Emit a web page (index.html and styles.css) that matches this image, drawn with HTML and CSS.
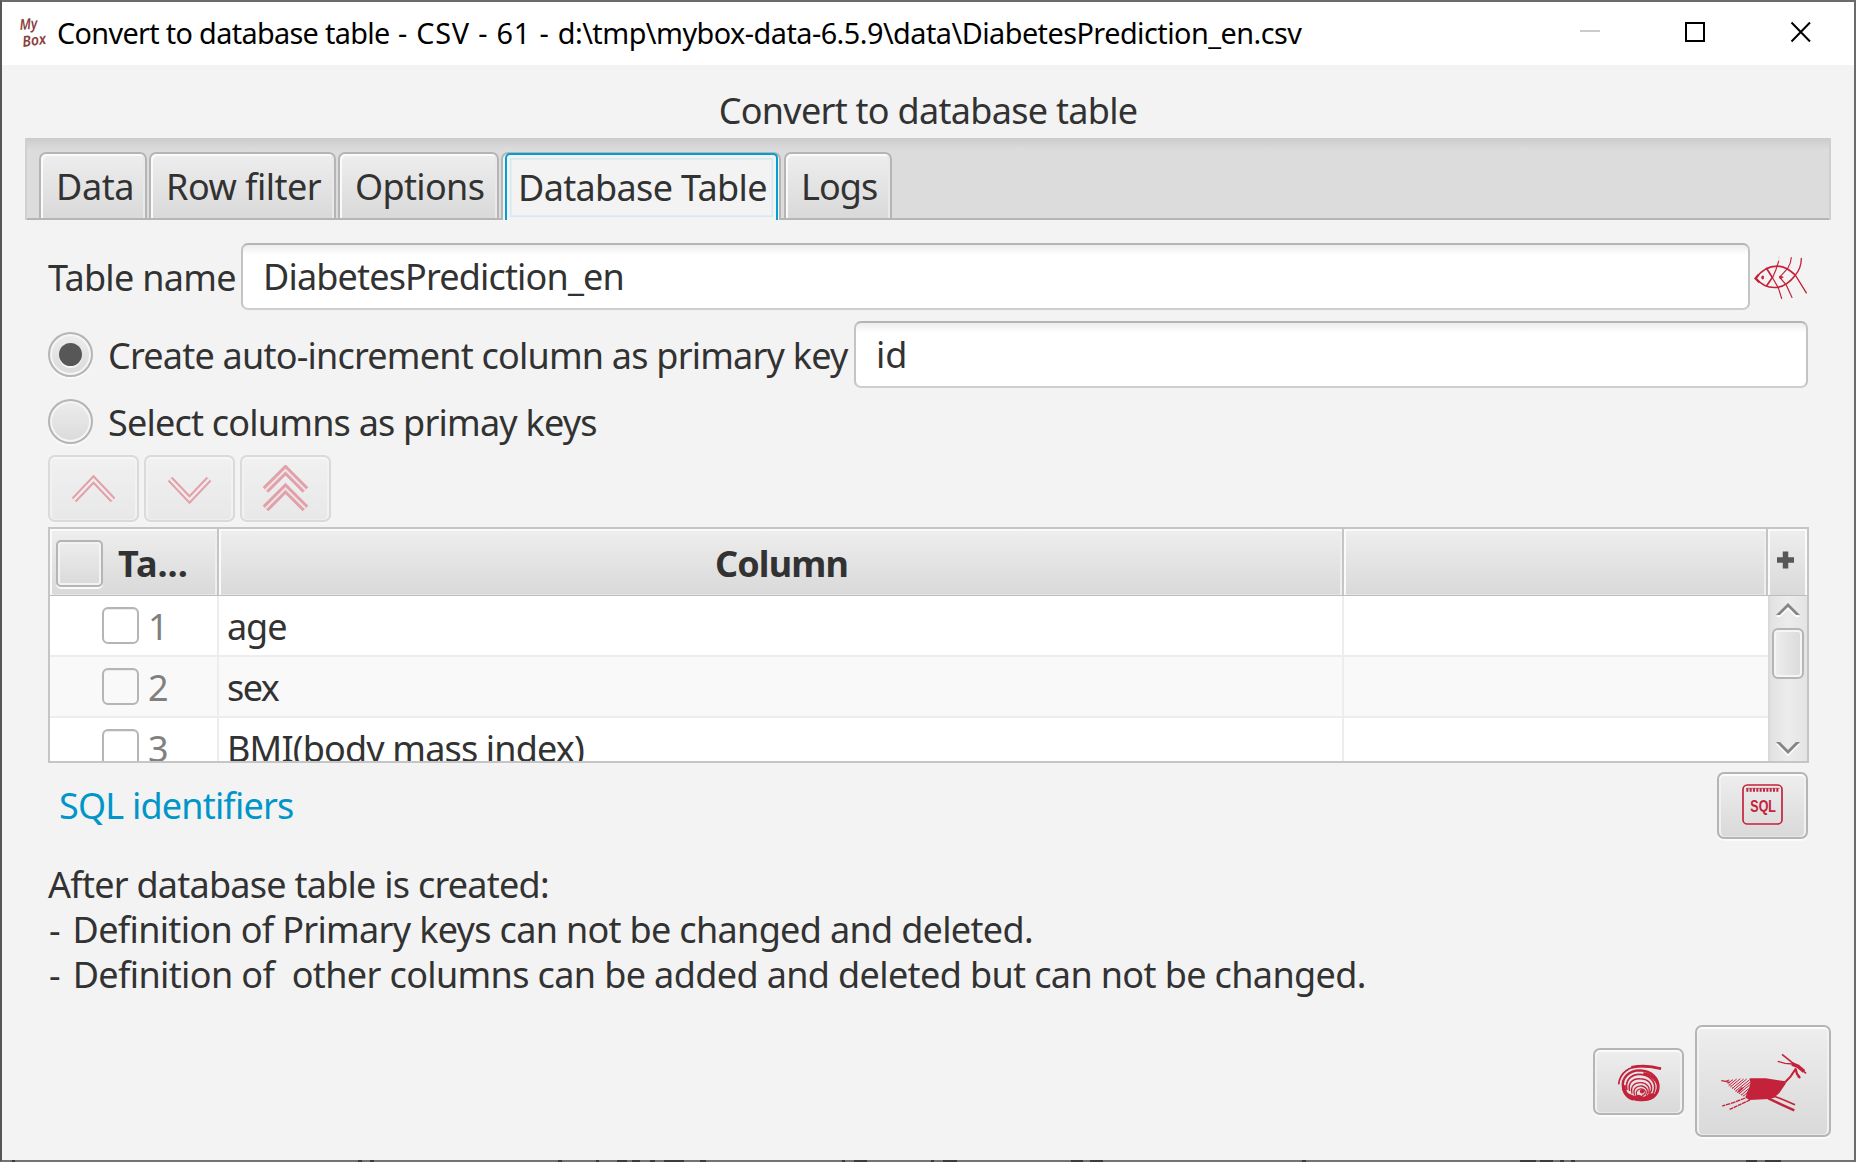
FILE: index.html
```html
<!DOCTYPE html>
<html lang="en">
<head>
<meta charset="utf-8">
<title>Convert to database table</title>
<link rel="stylesheet" href="styles.css">
</head>
<body>
<div class="window">
  <header class="titlebar">
    <svg class="logo" width="32" height="38" viewBox="0 -2 32 38">
      <text x="2" y="15" textLength="18" lengthAdjust="spacingAndGlyphs" transform="rotate(-5 2 15)">My</text>
      <text x="5" y="32" textLength="24" lengthAdjust="spacingAndGlyphs" transform="rotate(-8 5 32)">Box</text>
    </svg>
    <span class="caption"><span class="cap-name">Convert to database table</span><span class="cap-mid"> - CSV - 61 - </span><span class="cap-path">d:\tmp\mybox-data-6.5.9\data\DiabetesPrediction_en.csv</span></span>
    <svg class="controls" width="232" height="24" viewBox="0 0 232 24">
      <path d="M1 11H21" stroke="#ccc" stroke-width="2"/>
      <rect x="107" y="3" width="18" height="18" fill="none" stroke="#000" stroke-width="2"/>
      <path d="M212.500 2.500L231 21.500M231 2.500L212.500 21.500" stroke="#000" stroke-width="2"/>
    </svg>
  </header>

  <h1 class="heading">Convert to database table</h1>

  <nav class="tabs">
    <div class="tab tab-data">Data</div>
    <div class="tab tab-filter">Row filter</div>
    <div class="tab tab-options">Options</div>
    <div class="tab tab-database active"><span>Database Table</span></div>
    <div class="tab tab-logs">Logs</div>
  </nav>

  <main class="content">
    <div class="row name-row">
      <span class="label label-name">Table name</span>
      <div class="input input-name">DiabetesPrediction_en</div>
      <svg class="fish" width="56" height="48" viewBox="36 25.5 168 144">
        <g fill="none" stroke="#c4213a" stroke-linecap="round">
          <path d="M166 92C149 77 134 65 112 65C85 65 63 79 48 101C65 122 84 130 107 129C132 128 151 111 166 92" stroke-width="5"/>
          <path d="M55 91L46 102L56 112" stroke-width="6"/>
          <path d="M80 72L97 99L80 124" stroke-width="5"/>
          <path d="M97 101L108 75L116 50M97 99L115 130L125 162" stroke-width="3.500"/>
          <path d="M154 39Q153 56 143 72L119 98L139 122L156 159" stroke-width="3.500"/>
          <path d="M120 96L126 98L121 101" stroke-width="5"/>
          <path d="M184 42Q184 70 166 92L199 145" stroke-width="4"/>
          <path d="M117 37V43" stroke="#e9b5bc" stroke-width="2"/>
        </g>
        <ellipse cx="68" cy="99" rx="4" ry="6" fill="#c4213a"/>
      </svg>
    </div>

    <div class="row key-row">
      <span class="radio checked"></span>
      <span class="label label-create">Create auto-increment column as primary key</span>
      <div class="input input-id">id</div>
    </div>

    <div class="row select-row">
      <span class="radio"></span>
      <span class="label label-select">Select columns as primay keys</span>
    </div>

    <div class="toolbar">
      <div class="button disabled">
        <svg width="44" height="46" viewBox="0 0 44 46"><path class="edge" d="M2 34L21.500 13.500L41 34"/><path class="core" d="M2 34L21.500 13.500L41 34"/></svg>
      </div>
      <div class="button disabled">
        <svg width="44" height="46" viewBox="0 0 44 46"><path class="edge" d="M2 13L21.500 33.500L41 13"/><path class="core" d="M2 13L21.500 33.500L41 13"/></svg>
      </div>
      <div class="button disabled double">
        <svg width="46" height="48" viewBox="0 -1 46 48"><path class="edge" d="M2.500 24L22.500 4L42.500 24M2.500 42.500L22.500 22.500L42.500 42.500"/><path class="core" d="M2.500 24L22.500 4L42.500 24M2.500 42.500L22.500 22.500L42.500 42.500"/></svg>
      </div>
    </div>

    <div class="table">
      <div class="grid">
        <div class="th th-table"><span class="check-all"></span><span class="th-ta">Ta...</span></div>
        <div class="th th-column">Column</div>
        <div class="th"></div>
        <div class="td td-num"><span class="check"></span>1</div>
        <div class="td td-name age">age</div>
        <div class="td"></div>
        <div class="td td-num even"><span class="check"></span>2</div>
        <div class="td td-name even sex">sex</div>
        <div class="td even"></div>
        <div class="td td-num"><span class="check"></span>3</div>
        <div class="td td-name bmi">BMI(body mass index)</div>
        <div class="td"></div>
      </div>
      <div class="side">
        <div class="plus"><svg width="18" height="18" viewBox="0 0 18 18"><path d="M8.500 .5V17.500M0 9H17" stroke="#575757" stroke-width="5.500"/></svg></div>
        <div class="scrollbar">
          <svg width="24" height="14" viewBox="0 0 24 14"><path d="M0 14L12 2L24 14H20L12 6L4 14Z" fill="#fff"/><path d="M0 12L12 0L24 12H20L12 4L4 12Z" fill="#858585"/></svg>
          <div class="thumb"></div>
          <svg class="down" width="24" height="14" viewBox="0 0 24 14"><path d="M0 2L12 14L24 2H20L12 10L4 2Z" fill="#fff"/><path d="M0 0L12 12L24 0H20L12 8L4 0Z" fill="#858585"/></svg>
        </div>
      </div>
    </div>

    <div class="links">
      <a class="link">SQL identifiers</a>
      <div class="button">
        <svg width="87" height="63" viewBox="477 792 261 189">
          <rect x="549" y="825" width="117" height="117" rx="13" fill="none" stroke="#c4213a" stroke-width="5"/>
          <path d="M558 835H659" stroke="#c4213a" stroke-width="2"/>
          <path d="M559 840H659" stroke="#c4213a" stroke-width="11" stroke-dasharray="6 4"/>
          <text class="sql" x="571" y="905" textLength="77" lengthAdjust="spacingAndGlyphs">SQL</text>
        </svg>
      </div>
    </div>

    <div class="notes">
      <div class="note-1">After database table is created:</div>
      <div class="note-2"><span class="dash">-</span> Definition of Primary keys can not be changed and deleted.</div>
      <div class="note-3"><span class="dash">-</span> Definition of&nbsp; other columns can be added and deleted but can not be changed.</div>
    </div>
  </main>

  <footer class="actions">
    <div class="button">
      <svg width="87" height="63" viewBox="105 150 261 189">
        <g fill="none" stroke="#c4213a">
          <path d="M176 253C179 218 209 197 247 199C267 199 285 202 303 206" stroke-width="5"/>
          <path d="M214 202C242 196 276 198 303 206" stroke-width="8"/>
          <path d="M189 263C184 234 206 211 240 211C276 212 297 236 295 262C294 290 270 300 247 300C216 302 190 287 189 258" stroke-width="7"/>
          <path d="M192 256V268C197 284 206 292 220 297" stroke-width="11"/>
          <path d="M250 220C272 223 290 239 294 255C297 280 282 291 267 297" stroke-width="8"/>
          <path d="M201 270C194 241 213 222 241 223C268 225 286 243 284 266C282 283 274 288 266 293" stroke-width="5"/>
          <path d="M209 273C203 250 217 235 240 236C264 236 278 251 274 272L265 286" stroke-width="4.500"/>
          <path d="M216 281C211 260 222 247 242 248C261 249 272 262 266 280" stroke-width="4"/>
          <path d="M224 286C217 269 229 256 246 258C263 262 266 277 258 287" stroke-width="4"/>
          <path d="M232 289C223 273 237 263 250 268C260 274 257 286 246 286" stroke-width="3.500"/>
        </g>
        <path d="M204 280L222 287L237 284L252 290L274 280L288 284Q274 301 247 303Q220 303 204 290Z" fill="#c4213a"/>
        <circle cx="246" cy="274" r="6.500" fill="#c4213a"/>
      </svg>
    </div>
    <div class="button run">
      <svg width="132" height="108" viewBox="411 81 396 324">
        <path d="M569 235L617 235L678 244L677 251L658 279L642 293L628 297L568 300L557 293L560 279L568 262L571 250Z" fill="#c4213a"/>
        <g fill="none" stroke="#c4213a">
          <path d="M676 246L692 229L708 205" stroke-width="6"/>
          <path d="M666 163L696 187L714 199L738 220" stroke-width="5"/>
          <path d="M653 184L675 190L698 192" stroke-width="4"/>
          <path d="M696 192L714 199L732 214" stroke-width="11"/>
          <path d="M707 207L711 222L719 232" stroke-width="7"/>
          <path d="M713 229L721 234" stroke-width="5"/>
          <path d="M640 288L670 299L705 314" stroke-width="5"/>
          <path d="M625 295L663 313L703 331" stroke-width="7"/>
          <path d="M556 294L520 308L487 318" stroke-width="4" stroke-dasharray="14 2"/>
          <path d="M570 300L540 314L509 328" stroke-width="4" stroke-dasharray="12 2"/>
          <path d="M484 242L497 244L509 248" stroke-width="4"/>
          <path d="M497 244L508 240M503 250L519 239M506 257L530 237M511 261L541 236M516 266L551 237M522 269L560 237M526 274L569 239M531 278L571 246M537 281L570 254M543 286L566 266M550 289L562 277" stroke-width="3"/>
          <path d="M535 275L548 263" stroke-width="6"/>
          <path d="M505 251L533 277L560 292" stroke-width="2" stroke-dasharray="4 4"/>
        </g>
      </svg>
    </div>
  </footer>
</div>
<svg class="backdrop" width="1856" height="2" viewBox="0 0 1856 2">
  <path stroke="#3a3c3c" stroke-width="2" d="M12 1h3M358 1h4M370 1h4M558 1h4M596 1h3M617 1h10M632 1h8M650 1h5M664 1h20M700 1h6M842 1h3M854 1h13M931 1h3M943 1h14M1071 1h12M1090 1h13M1302 1h4M1520 1h16M1540 1h13M1560 1h4M1571 1h4M1746 1h11M1765 1h16"/>
</svg>
</body>
</html>
```
FILE: styles.css
```css
* { box-sizing: border-box; }
body {
  margin: 0;
  width: 1856px;
  height: 1162px;
  position: relative;
  overflow: hidden;
  background: #6b6b6b;
  font-family: "Noto Sans", "Liberation Sans", sans-serif;
  font-size: 36px;
  letter-spacing: -0.7px;
  color: #323232;
  white-space: nowrap;
}
svg { display: block; flex: none; }

.window {
  width: 1856px;
  height: 1162px;
  border: 2px solid #6b6b6b;
  border-left-color: #565656;
  border-bottom-color: #727272;
  background: #f3f3f3;
  display: flex;
  flex-direction: column;
}
.backdrop { position: absolute; left: 0; bottom: 0; }

.titlebar {
  height: 63px;
  flex: none;
  padding: 0 43px 3px 16px;
  background: #fff;
  display: flex;
  align-items: center;
}
.logo { overflow: visible; fill: #8b3f3f; font-size: 15px; font-style: italic; font-weight: 600; letter-spacing: 0; }
.caption { margin-left: 7px; padding-top: 1px; color: #000; font-size: 28.8px; line-height: 40px; white-space: pre; }
.cap-name { letter-spacing: -0.66px; }
.cap-mid { letter-spacing: 0.8px; }
.cap-path { letter-spacing: -0.52px; }
.controls { margin-left: auto; }

.heading {
  flex: none;
  margin: 17px 0 0;
  height: 56px;
  font-size: 36px;
  font-weight: 400;
  line-height: 58px;
  text-align: center;
  letter-spacing: -0.71px;
}

.tabs {
  flex: none;
  height: 82px;
  margin: 0 23px;
  padding: 14px 0 0 14px;
  display: flex;
  gap: 2px;
  background: linear-gradient(#cbcbcb, #dcdcdc 12px);
  box-shadow: inset 2px 0 #d0d0d0, inset -2px 0 #cfcfcf, inset 0 -2px #b5b5b5;
}
.tab {
  height: 68px;
  border: 2px solid #b5b5b5;
  border-radius: 7px 7px 0 0;
  line-height: 66px;
  padding-left: 15px;
  background: linear-gradient(#eeeeee, #d9d9d9);
  box-shadow: inset 2px 2px #fafafa, inset -2px 0 #e9e9e9;
}
.tab-data { width: 108px; letter-spacing: -0.4px; }
.tab-filter { width: 187px; letter-spacing: -0.5px; }
.tab-options { width: 161px; letter-spacing: -0.65px; }
.tab-database { width: 280px; letter-spacing: -0.65px; }
.tab-logs { width: 108px; margin-left: 1px; letter-spacing: -0.93px; }
.tab.active {
  padding: 0 1px 0 2px;
  border-bottom: 0;
  background: #f3f3f3;
  box-shadow: none;
}
.tab.active span {
  display: block;
  height: 66px;
  margin-top: -1px;
  height: 67px;
  padding-left: 11px;
  border: 2px solid #039ed3;
  border-bottom: 0;
  border-radius: 5px 5px 0 0;
  line-height: 65px;
  background: #f3f3f3;
  box-shadow: inset 0 0 0 3px #f3f3f3, inset 0 0 0 4.500px #d3e8f0;
}

.content { flex: none; padding: 23px 45px 0 46px; }
.row { display: flex; align-items: center; }
.label { padding-top: 1px; }
.input {
  height: 67px;
  padding-left: 20px;
  line-height: 64px;
  border: 2px solid #c4c4c4;
  border-top-color: #b5b5b5;
  border-bottom-color: #cecece;
  border-radius: 7px;
  background: linear-gradient(#ededed, #fff 10px);
}
.name-row { height: 67px; }
.label-name { width: 193px; letter-spacing: -0.7px; }
.input-name { width: 1509px; letter-spacing: -0.84px; }
.fish { margin-left: 2px; }

.key-row { height: 67px; margin-top: 11px; }
.radio {
  width: 45px;
  height: 45px;
  flex: none;
  border: 2px solid #b5b5b5;
  border-radius: 50%;
  background: linear-gradient(#ededed, #dadada);
  box-shadow: inset 0 0 0 2px #f5f5f5, 0 2px #fafafa;
  display: grid;
  place-items: center;
}
.radio.checked::after { content: ""; width: 23px; height: 23px; border-radius: 50%; background: #575757; box-shadow: 0 2px #f4f4f4; }
.label-create { margin-left: 15px; width: 746px; letter-spacing: -0.784px; }
.input-id { width: 954px; letter-spacing: 0; }
.select-row { height: 45px; margin-top: 11px; }
.label-select { margin-left: 15px; letter-spacing: -0.784px; }

.button {
  flex: none;
  width: 91px;
  height: 67px;
  border: 2px solid #b5b5b5;
  border-radius: 7px;
  background: linear-gradient(#eeeeee, #d9d9d9);
  box-shadow: inset 0 2px #fbfbfb, inset 2px 0 #f1f1f1, inset -2px 0 #f1f1f1, inset 0 -1px #e6e6e6, 0 2px #fafafa;
  display: flex;
  align-items: center;
  justify-content: center;
}
.toolbar { display: flex; gap: 5px; margin-top: 11px; }
.button.disabled { opacity: .4; }
.edge, .core { fill: none; }
.edge { stroke: #c8283f; stroke-width: 6.5; }
.core { stroke: #f2dde0; stroke-width: 2.5; }
.double .edge { stroke-width: 8; }
.double .core { stroke: #eccdd2; stroke-width: 2; }

.table {
  width: 1761px;
  height: 236px;
  margin-top: 5px;
  border: 2px solid #c5c5c5;
  display: flex;
  overflow: hidden;
}
.grid {
  width: 1718px;
  flex: none;
  display: grid;
  grid-template-columns: 169px 1125px 424px;
  grid-template-rows: 67px 61px 61px 61px;
}
.th {
  border-right: 2px solid #c5c5c5;
  border-bottom: 1px solid #bdbdbd;
  background: linear-gradient(#eeeeee, #d9d9d9);
  box-shadow: inset 2px 2px #fafafa, inset -2px 0 #eeeeee, inset 0 -1px #e5e5e5;
  font-weight: 700;
  line-height: 70px;
  letter-spacing: -0.85px;
  text-align: center;
}
.th-column { padding-left: 2px; }
.th-table { display: flex; padding: 11px 0 0 6px; }
.th-ta { margin: -11px 0 0 15px; letter-spacing: 0; }
.check-all {
  width: 47px;
  height: 47px;
  border: 2px solid #b5b5b5;
  border-radius: 5px;
  background: linear-gradient(#ededed, #dadada);
  box-shadow: inset 0 0 0 2px #f3f3f3, 0 2px #fafafa;
}
.td {
  border-right: 2px solid #ededed;
  border-bottom: 2px solid #ededed;
  background: #fff;
  line-height: 62px;
}
.td:nth-child(3n) { border-right: 0; }
.td.even { background: #f9f9f9; }
.td-num { display: flex; padding-left: 52px; color: #808080; letter-spacing: 0; }
.check { width: 37px; height: 37px; margin: 11px 9px 0 0; border: 2px solid #b5b5b5; border-radius: 6px; box-shadow: inset 0 1px #ececec; }
.td-name { padding-left: 8px; }
.age { letter-spacing: -1.1px; }
.sex { letter-spacing: -1.5px; }
.bmi { letter-spacing: -0.834px; }
.side { width: 39px; }
.plus {
  height: 67px;
  padding: 22px 0 0 9px;
  border-bottom: 1px solid #bdbdbd;
  background: linear-gradient(#eeeeee, #d9d9d9);
  box-shadow: inset 2px 2px #fafafa, inset -2px 0 #fafafa;
}
.scrollbar {
  height: 165px;
  padding: 7px 0 5px 1px;
  display: flex;
  flex-direction: column;
  align-items: center;
  background: linear-gradient(90deg, #d6d6d6, #e2e2e2 3px, #ececec 50%, #e4e4e4);
}
.thumb {
  width: 32px;
  height: 51px;
  margin-top: 11px;
  border: 2px solid #b5b5b5;
  border-radius: 6px;
  background: linear-gradient(90deg, #eeeeee, #dadada);
  box-shadow: inset 0 0 0 2px #f5f5f5;
}
.down { margin-top: auto; }

.links { display: flex; align-items: center; height: 67px; margin-top: 9px; padding: 0 1px 0 11px; }
.link { color: #0096c9; letter-spacing: -0.8px; line-height: 67px; }
.links .button { margin-left: auto; }
.sql { fill: #c4213a; font: 700 52px "Liberation Sans", sans-serif; letter-spacing: 0; }

.notes { margin-top: 23px; line-height: 45px; }
.note-1 { letter-spacing: -0.749px; }
.dash { margin: 0 4px 0 1px; }
.note-2 { letter-spacing: -0.675px; }
.note-3 { letter-spacing: -0.625px; }

.actions { display: flex; justify-content: flex-end; align-items: center; gap: 11px; margin: 28px 23px 0 0; }
.button.run { width: 136px; height: 112px; }
```
